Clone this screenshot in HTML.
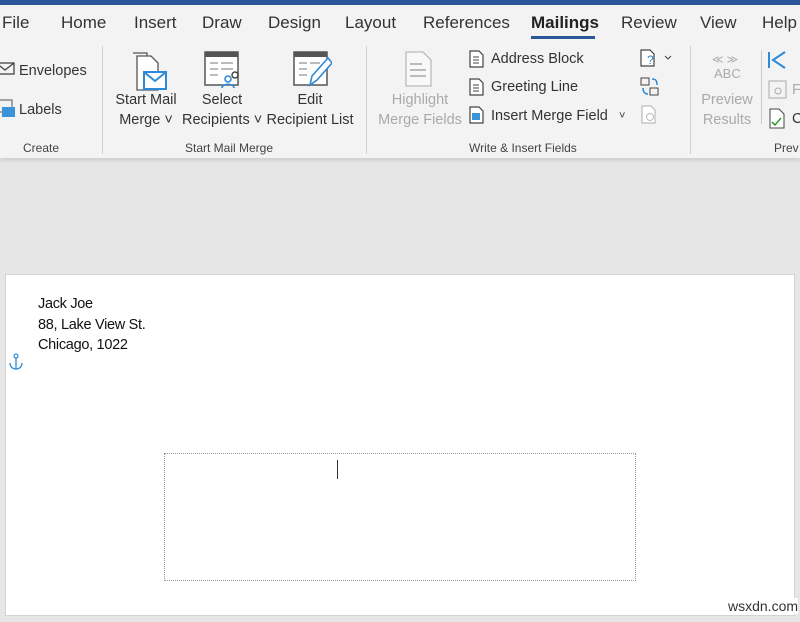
<!DOCTYPE html><html><head><style>
body{margin:0;width:800px;height:622px;overflow:hidden;background:#e6e6e6;font-family:"Liberation Sans",sans-serif;position:relative}
.a{position:absolute;white-space:nowrap}
.tab{top:13px;font-size:17px;color:#333}
.lbl{font-size:14.5px;color:#333;text-align:center;line-height:20px}
.grp{font-size:12px;color:#444;top:141px}
.dis{color:#aaa}
.sep{position:absolute;width:1px;background:#d0d0d0;top:46px;height:108px}
</style></head><body>
<div class="a" style="left:0;top:0;width:800px;height:5px;background:#2b579a"></div>
<div class="a" style="left:0;top:5px;width:800px;height:153px;background:#f3f3f3;box-shadow:0 2px 4px rgba(0,0,0,.12)"></div>
<div class="a tab" style="left:2px">File</div>
<div class="a tab" style="left:61px">Home</div>
<div class="a tab" style="left:134px">Insert</div>
<div class="a tab" style="left:202px">Draw</div>
<div class="a tab" style="left:268px">Design</div>
<div class="a tab" style="left:345px">Layout</div>
<div class="a tab" style="left:423px">References</div>
<div class="a tab" style="left:531px;color:#222;font-weight:bold">Mailings</div>
<div class="a" style="left:531px;top:36px;width:64px;height:3px;background:#2b579a"></div>
<div class="a tab" style="left:621px">Review</div>
<div class="a tab" style="left:700px">View</div>
<div class="a tab" style="left:762px">Help</div>

<svg class="a" style="left:0;top:62px" width="18" height="14"><rect x="-4" y="1" width="18" height="11" fill="none" stroke="#444" stroke-width="1.3"/><path d="M-4 1 L5 8 L14 1" fill="none" stroke="#444" stroke-width="1.3"/></svg>
<div class="a lbl" style="left:19px;top:61px">Envelopes</div>
<svg class="a" style="left:0;top:99px" width="18" height="20"><rect x="-2" y="1" width="14" height="12" fill="none" stroke="#555"/><rect x="2" y="8" width="13" height="10" fill="#3b93d8"/></svg>
<div class="a lbl" style="left:19px;top:100px">Labels</div>
<div class="a grp" style="left:23px">Create</div>
<div class="sep" style="left:102px"></div>

<svg class="a" style="left:130px;top:50px" width="38" height="42"><path d="M3 3h14v33" fill="none" stroke="#555" stroke-width="1.3"/><path d="M7 6h14l7 7v27H7z" fill="#fff" stroke="#555" stroke-width="1.3"/><rect x="14" y="22" width="22" height="17" fill="#fff" stroke="#2d8ad8" stroke-width="2"/><path d="M14 22l11 9 11-9" fill="none" stroke="#2d8ad8" stroke-width="2"/></svg>
<div class="a lbl" style="left:112px;top:90px;width:68px">Start Mail<br>Merge ˅</div>
<svg class="a" style="left:203px;top:50px" width="42" height="40"><rect x="2" y="2" width="33" height="33" fill="#fff" stroke="#555" stroke-width="1.5"/><rect x="2" y="2" width="33" height="5" fill="#555"/><path d="M7 13h8M18 13h12M7 19h8M18 19h12M7 25h8" stroke="#777"/><circle cx="25" cy="29" r="3" fill="none" stroke="#2d8ad8" stroke-width="1.6"/><path d="M19 38c0-5 12-5 12 0" fill="none" stroke="#2d8ad8" stroke-width="1.6"/><circle cx="32" cy="25" r="3" fill="none" stroke="#444" stroke-width="1.5"/></svg>
<div class="a lbl" style="left:182px;top:90px;width:80px">Select<br>Recipients ˅</div>
<svg class="a" style="left:292px;top:50px" width="40" height="40"><rect x="2" y="2" width="33" height="33" fill="#fff" stroke="#555" stroke-width="1.5"/><rect x="2" y="2" width="33" height="5" fill="#555"/><path d="M7 13h8M18 13h10M7 19h8M7 25h8" stroke="#777"/><path d="M36 8l-16 18-2 9 7-5 15-17z" fill="#fff" stroke="#2d8ad8" stroke-width="1.6"/></svg>
<div class="a lbl" style="left:266px;top:90px;width:88px">Edit<br>Recipient List</div>
<div class="a grp" style="left:185px">Start Mail Merge</div>
<div class="sep" style="left:366px"></div>

<svg class="a" style="left:404px;top:50px" width="30" height="38"><path d="M2 2h17l8 8v26H2z" fill="#f8f8f8" stroke="#bbb" stroke-width="1.3"/><path d="M6 14h12M6 20h16M6 26h16" stroke="#bbb" stroke-width="2"/></svg>
<div class="a lbl dis" style="left:376px;top:90px;width:88px">Highlight<br>Merge Fields</div>
<svg class="a" style="left:469px;top:50px" width="16" height="18"><path d="M1 1h9l4 4v12H1z" fill="#fff" stroke="#444" stroke-width="1.2"/><path d="M4 7h6M4 10h6M4 13h6" stroke="#444"/></svg>
<div class="a lbl" style="left:491px;top:49px">Address Block</div>
<svg class="a" style="left:469px;top:78px" width="16" height="18"><path d="M1 1h9l4 4v12H1z" fill="#fff" stroke="#444" stroke-width="1.2"/><path d="M4 7h6M4 10h6M4 13h6" stroke="#444"/></svg>
<div class="a lbl" style="left:491px;top:77px">Greeting Line</div>
<svg class="a" style="left:469px;top:106px" width="16" height="18"><path d="M1 1h9l4 4v12H1z" fill="#fff" stroke="#444" stroke-width="1.2"/><rect x="3" y="7" width="8" height="7" fill="#3b93d8"/></svg>
<div class="a lbl" style="left:491px;top:106px">Insert Merge Field</div>
<div class="a lbl" style="left:619px;top:106px;font-size:11px">˅</div>
<svg class="a" style="left:640px;top:49px" width="34" height="20"><path d="M1 1h9l4 4v12H1z" fill="#fff" stroke="#444" stroke-width="1.2"/><text x="7" y="15" font-size="12" fill="#2d8ad8" font-family="Liberation Sans">?</text><path d="M25 7l3 3 3-3" fill="none" stroke="#444"/></svg>
<svg class="a" style="left:639px;top:76px" width="22" height="22"><rect x="2" y="2" width="8" height="7" fill="none" stroke="#444"/><rect x="11" y="12" width="8" height="7" fill="none" stroke="#444"/><path d="M13 3c4 0 5 2 5 6M4 12c0 4 2 6 5 6" fill="none" stroke="#2d8ad8" stroke-width="1.5"/></svg>
<svg class="a" style="left:641px;top:105px" width="18" height="20"><path d="M1 1h9l4 4v13H1z" fill="#fff" stroke="#bbb" stroke-width="1.2"/><circle cx="9" cy="12" r="3.5" fill="none" stroke="#bbb"/></svg>
<div class="a grp" style="left:469px">Write &amp; Insert Fields</div>
<div class="sep" style="left:690px"></div>

<div class="a dis" style="left:712px;top:53px;font-size:11px">≪ ≫</div>
<div class="a dis" style="left:714px;top:66px;font-size:13px">ABC</div>
<div class="a lbl dis" style="left:700px;top:90px;width:54px">Preview<br>Results</div>
<div class="a" style="left:761px;top:50px;width:1px;height:74px;background:#ccc"></div>
<svg class="a" style="left:767px;top:50px" width="22" height="20"><path d="M2 2v16M18 2L6 10l12 8" fill="none" stroke="#2d8ad8" stroke-width="2"/></svg>
<svg class="a" style="left:768px;top:80px" width="20" height="20"><rect x="1" y="1" width="17" height="17" fill="none" stroke="#aaa"/><circle cx="10" cy="11" r="3" fill="none" stroke="#aaa"/></svg>
<div class="a lbl dis" style="left:792px;top:80px">F</div>
<svg class="a" style="left:768px;top:108px" width="20" height="22"><path d="M2 1h9l5 5v14H2z" fill="#fff" stroke="#444"/><path d="M4 14l3 3 6-7" fill="none" stroke="#3a9a3a" stroke-width="1.6"/></svg>
<div class="a lbl" style="left:792px;top:109px">C</div>
<div class="a grp" style="left:774px">Prev</div>

<div class="a" style="left:5px;top:274px;width:788px;height:340px;background:#fff;border:1px solid #d4d4d4"></div>
<div class="a" style="left:38px;top:294px;font-size:14.5px;line-height:20.5px;color:#111;letter-spacing:-0.3px">Jack Joe<br>88, Lake View St.<br>Chicago, 1022</div>
<svg class="a" style="left:8px;top:353px" width="16" height="18"><circle cx="8" cy="3" r="2" fill="none" stroke="#2d8ad8" stroke-width="1.2"/><path d="M8 5v11M2 10c0 4 3 6 6 6s6-2 6-6" fill="none" stroke="#2d8ad8" stroke-width="1.3"/></svg>
<div class="a" style="left:164px;top:453px;width:470px;height:126px;border:1px dotted #999"></div>
<div class="a" style="left:337px;top:460px;width:1px;height:19px;background:#333"></div>
<div class="a" style="left:728px;top:598px;font-size:14px;color:#333;background:#fff">wsxdn.com</div>
</body></html>
